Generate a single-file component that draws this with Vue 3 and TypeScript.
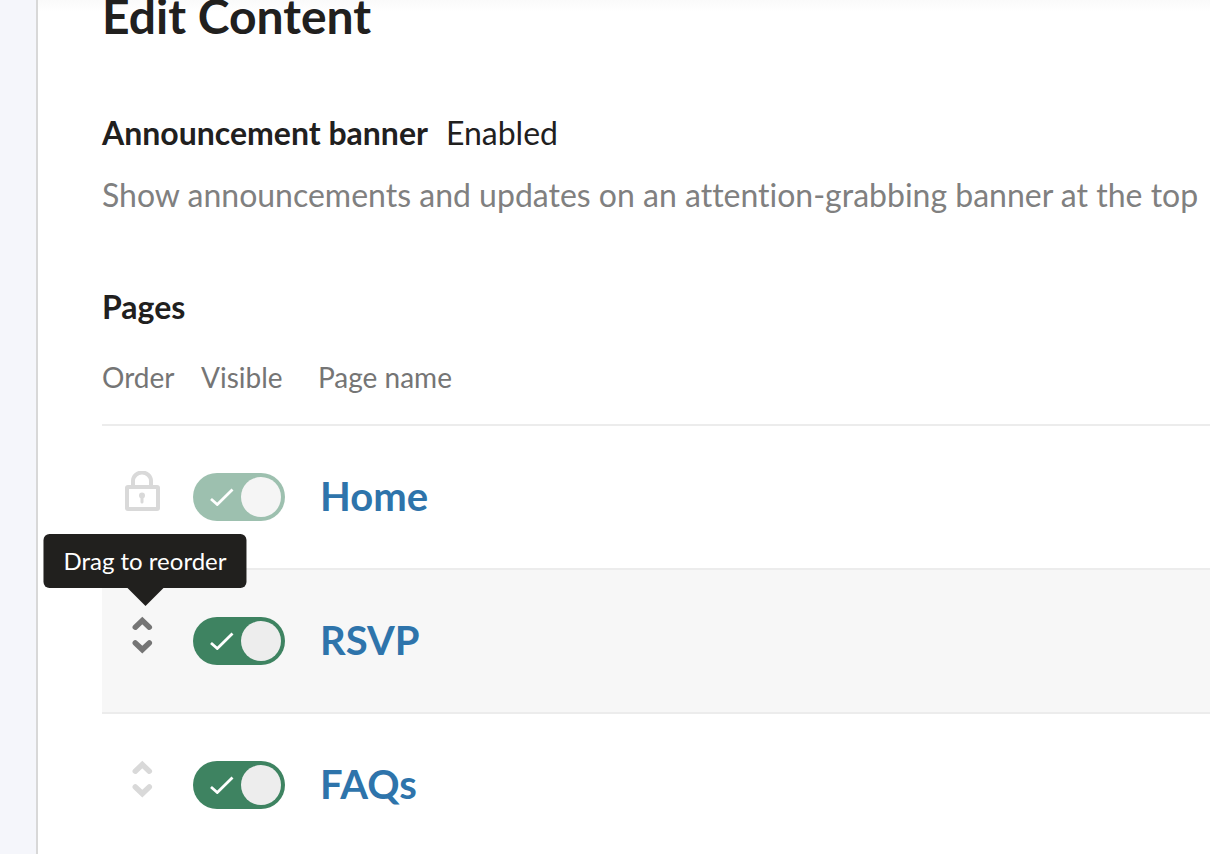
<script setup lang="ts">
import { ref } from 'vue'

interface Page {
  id: string
  name: string
  visible: boolean
  locked: boolean
}

const pages = ref<Page[]>([
  { id: 'home', name: 'Home', visible: true, locked: true },
  { id: 'rsvp', name: 'RSVP', visible: true, locked: false },
  { id: 'faqs', name: 'FAQs', visible: true, locked: false },
])

const activeId = ref('rsvp')
</script>

<template>
  <div class="layout">
    <aside class="rail"></aside>
    <main class="content">
      <h1 class="title">Edit Content</h1>

      <section class="banner">
        <div class="banner-head">
          <h2 class="heading">Announcement banner</h2>
          <span class="status">Enabled</span>
        </div>
        <p class="description">Show announcements and updates on an attention-grabbing banner at the top</p>
      </section>

      <section>
        <h2 class="heading">Pages</h2>
        <table class="pages">
          <thead>
            <tr>
              <th class="col-order" scope="col">Order</th>
              <th class="col-visible" scope="col">Visible</th>
              <th scope="col">Page name</th>
            </tr>
          </thead>
          <tbody>
            <tr v-for="page in pages" :key="page.id" :class="{ active: page.id === activeId }">
              <td>
                <div v-if="page.locked" class="handle">
                  <svg class="icon" viewBox="0 0 40 40" aria-hidden="true">
                    <path d="M11 15V10a9 8.500 0 0 1 18 0v5" fill="none" stroke="currentColor" stroke-width="4" />
                    <rect x="5" y="16" width="31" height="22" rx="1" fill="none" stroke="currentColor" stroke-width="4" />
                    <circle cx="20" cy="24.500" r="3" fill="currentColor" />
                    <path d="M20 25v6" stroke="currentColor" stroke-width="3" stroke-linecap="round" />
                  </svg>
                </div>
                <button v-else type="button" class="handle" :aria-label="`Reorder ${page.name}`">
                  <svg class="icon" viewBox="0 0 40 40" aria-hidden="true">
                    <g fill="none" stroke="currentColor" stroke-width="5.500" stroke-linecap="round">
                      <path d="M13.300 12.200L20.300 5.600L27.300 12.200" />
                      <path d="M13.300 28L20.300 34.600L27.300 28" />
                    </g>
                  </svg>
                  <span v-if="page.id === activeId" class="tooltip" role="tooltip">Drag to reorder</span>
                </button>
              </td>
              <td>
                <label class="toggle">
                  <input v-model="page.visible" type="checkbox" role="switch" :disabled="page.locked" :aria-label="`${page.name} visible`" />
                  <svg class="check" viewBox="0 0 24 18" aria-hidden="true">
                    <path d="M1 11L7.300 16.500L22.500 1.500" fill="none" stroke="currentColor" stroke-width="2.800" />
                  </svg>
                  <span class="knob"></span>
                </label>
              </td>
              <td class="name"><a class="page-link" :href="`#${page.id}`">{{ page.name }}</a></td>
            </tr>
          </tbody>
        </table>
      </section>
    </main>
  </div>
</template>

<style>
body {
  margin: 0;
  background: #fff;
}
</style>

<style scoped>
.layout {
  display: flex;
  height: 100vh;
  overflow: hidden;
  font-family: Lato, "Liberation Sans", sans-serif;
  font-variant-ligatures: none;
  color: #21201e;
  background: linear-gradient(#fafafa, #fff 12px);
}
.rail {
  flex: 0 0 36px;
  border-right: 2px solid #d8d8d8;
  background: #f5f6fb;
}
.content {
  flex: 1;
  min-width: 0;
  padding-left: 64px;
}
.title {
  margin: 0;
  font-size: 48px;
  line-height: 32px;
  font-weight: 700;
}
.banner {
  margin: 80px 0 70px;
}
.banner-head {
  display: flex;
  align-items: baseline;
  gap: 18px;
}
.heading {
  margin: 0;
  font-size: 32px;
  line-height: 42px;
  font-weight: 700;
}
.status {
  font-size: 32px;
  line-height: 42px;
}
.description {
  margin: 20px 0 0;
  font-size: 32px;
  line-height: 42px;
  color: #808080;
  white-space: nowrap;
}
.pages {
  width: 100%;
  table-layout: fixed;
  border-collapse: separate;
  border-spacing: 0;
}
th {
  height: 94px;
  padding: 2px 0 0;
  border-bottom: 2px solid #ececec;
  color: #757575;
  font-size: 28px;
  line-height: 32px;
  font-weight: 400;
  text-align: left;
}
.col-order {
  width: 91px;
}
.col-visible {
  width: 117px;
  padding-left: 8px;
}
td {
  height: 142px;
  padding: 0;
  border-bottom: 2px solid #ececec;
  vertical-align: middle;
}
.active td {
  background: #f7f7f7;
}
.handle {
  position: relative;
  display: block;
  margin: 0 0 12px 20px;
  padding: 0;
  border: 0;
  width: 40px;
  height: 40px;
  background: none;
  font-family: inherit;
  color: #d9d9d9;
  cursor: grab;
}
.active .handle {
  color: #757575;
}
.icon {
  display: block;
  width: 40px;
  height: 40px;
}
.tooltip {
  position: absolute;
  bottom: 67px;
  left: 23px;
  transform: translateX(-50%);
  padding: 0 20px;
  border-radius: 6px;
  background: #21201e;
  color: #fff;
  font-size: 24px;
  line-height: 54px;
  white-space: nowrap;
}
.tooltip::after {
  content: "";
  position: absolute;
  top: 100%;
  left: 50%;
  margin-left: -18px;
  border: 18px solid transparent;
  border-top-color: #21201e;
  border-bottom: 0;
}
.toggle {
  position: relative;
  display: block;
  width: 92px;
  height: 48px;
}
.toggle input {
  appearance: none;
  display: block;
  width: 100%;
  height: 100%;
  margin: 0;
  border-radius: 24px;
  background: #a6a6a6;
}
.toggle input:checked {
  background: #3e8361;
}
.toggle:has(input:disabled) {
  opacity: 0.5;
}
.check {
  position: absolute;
  top: 15px;
  left: 17px;
  width: 24px;
  height: 18px;
  color: #fff;
  pointer-events: none;
}
.knob {
  position: absolute;
  top: 4px;
  left: 4px;
  width: 40px;
  height: 40px;
  border-radius: 50%;
  background: #ededed;
  pointer-events: none;
}
input:checked ~ .knob {
  left: 48px;
}
input:not(:checked) ~ .check {
  display: none;
}
.name {
  padding: 0 0 2px 2px;
  height: 140px;
}
.page-link {
  color: #2e74ab;
  font-size: 40px;
  line-height: 48px;
  font-weight: 700;
  text-decoration: none;
}
</style>
